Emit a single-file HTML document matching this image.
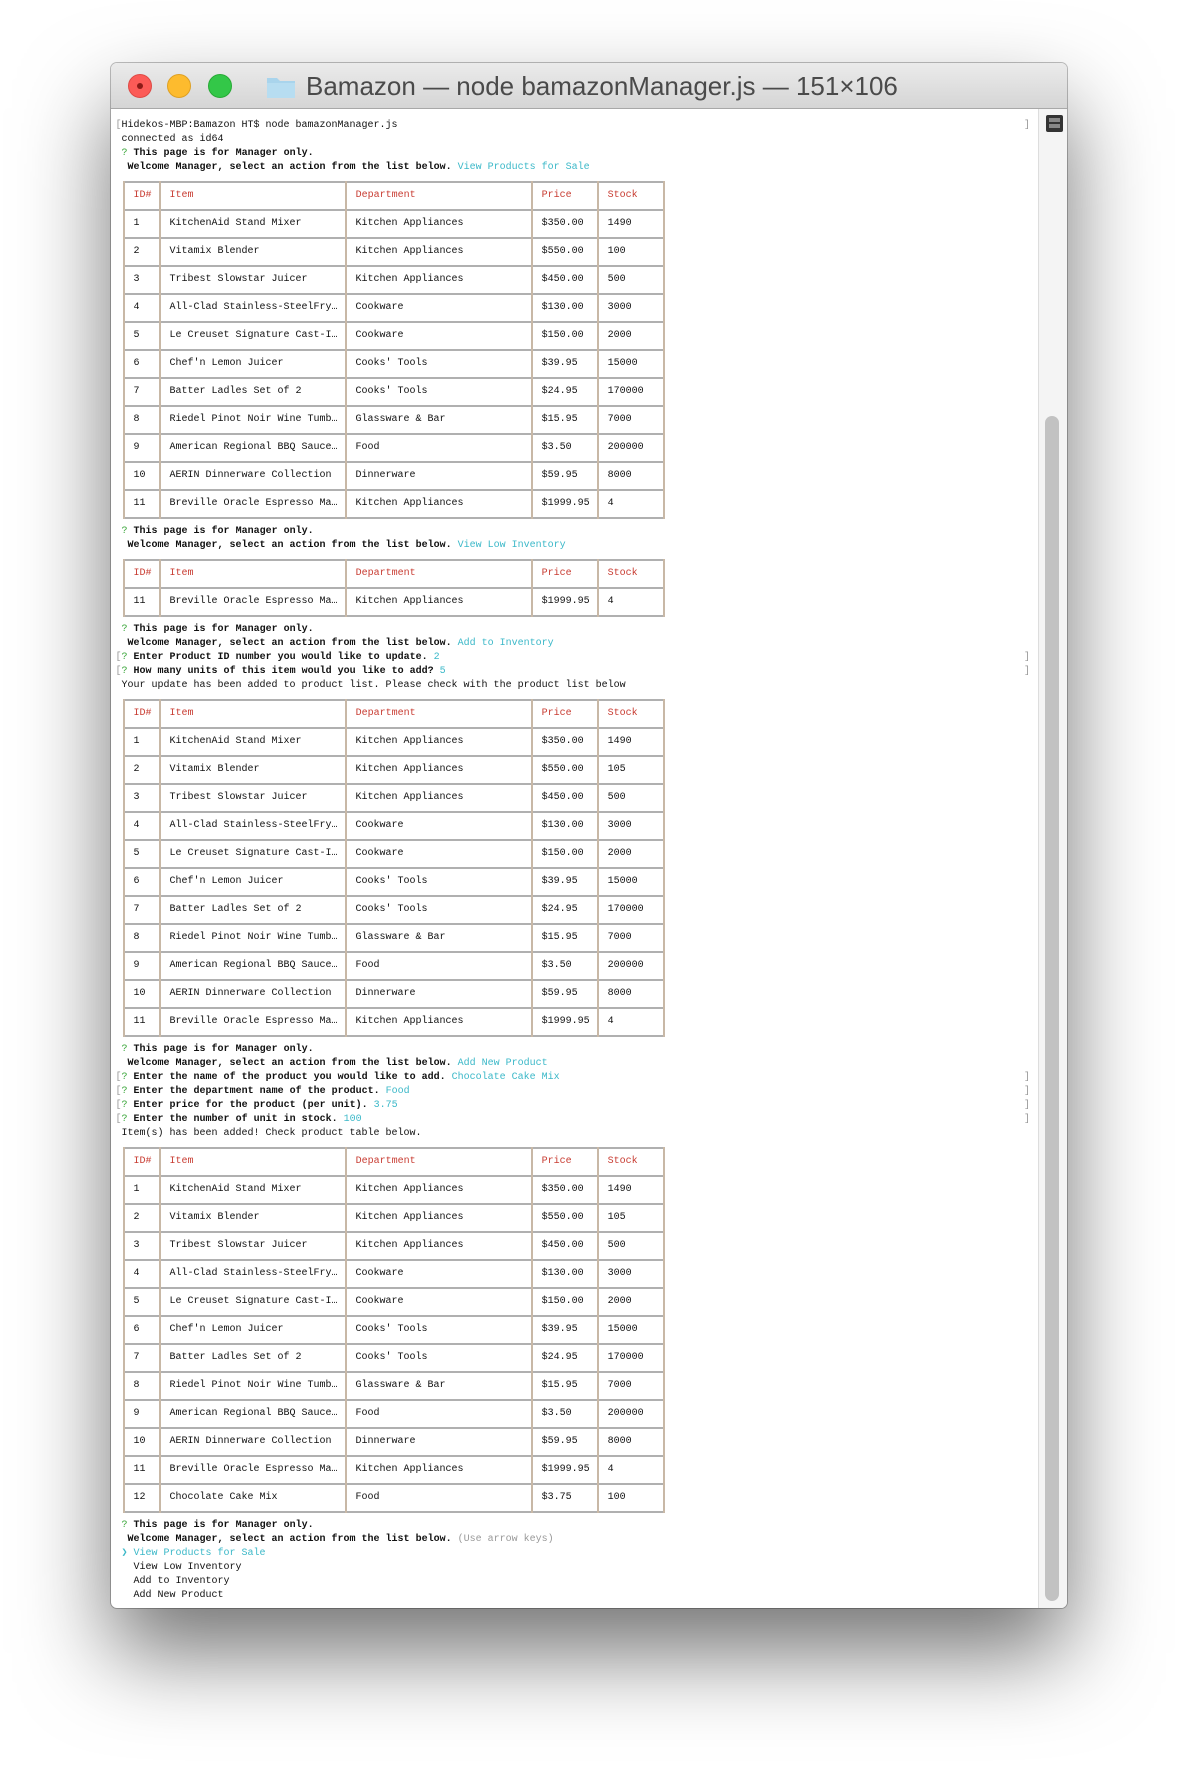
<!DOCTYPE html>
<html><head><meta charset="utf-8"><style>
html,body{margin:0;padding:0;background:#fff;width:1180px;height:1770px;overflow:hidden}
#win{position:absolute;left:111px;top:63px;width:956px;height:1545px;border-radius:6px;background:#fff;box-shadow:0 45px 90px rgba(0,0,0,.55),0 0 0 1px rgba(0,0,0,.25);overflow:hidden}
#tb{position:absolute;left:0;top:0;width:100%;height:45px;background:linear-gradient(#ebebeb,#d5d5d5);border-bottom:1px solid #a8a8a8}
.dot{position:absolute;top:11px;width:24px;height:24px;border-radius:50%}
#title{position:absolute;left:195px;top:8px;font:26px "Liberation Sans",sans-serif;color:#4a4a4a;white-space:nowrap}
#sb{position:absolute;left:927px;top:46px;width:29px;height:1500px;background:#f4f4f4;border-left:1px solid #ddd}
#thumb{position:absolute;left:934px;top:353px;width:14px;height:1185px;border-radius:7px;background:#c2c2c2}
.l{position:absolute;white-space:pre;font:10px/14px "Liberation Mono",monospace;color:#111;left:115.5px}
.b{font-weight:bold}.g{color:#3aa63a}.c{color:#3bb8c8}.r{color:#c83c32}.x{color:#999}
.h{position:absolute;height:2px;background:#b0b0b0;left:124px;width:541px}
.v{position:absolute;width:2px;background:#c8b8a6}
</style></head><body>
<div id="win">
<div id="tb">
<div class="dot" style="left:17px;background:#fc5b57;border:1px solid #de4a45;box-sizing:border-box"><div style="position:absolute;left:8px;top:8px;width:6px;height:6px;border-radius:50%;background:#8c1b17"></div></div>
<div class="dot" style="left:56px;background:#fdbb2e;border:1px solid #dea023;box-sizing:border-box"></div>
<div class="dot" style="left:97px;background:#33c748;border:1px solid #27aa35;box-sizing:border-box"></div>
<svg style="position:absolute;left:155px;top:12px" width="30" height="24"><path d="M1 3h10l3 3h15v17H1z" fill="#a9d4ec"/><path d="M1 8h28v15H1z" fill="#b7ddf1"/></svg>
<div id="title">Bamazon — node bamazonManager.js — 151×106</div>
</div>
<div id="sb"></div><div id="thumb"></div>
<div style="position:absolute;left:935px;top:52px;width:17px;height:17px;background:#333;border-radius:2px"><div style="position:absolute;left:3px;top:3px;width:11px;height:4px;background:#888"></div><div style="position:absolute;left:3px;top:9px;width:11px;height:4px;background:#888"></div></div>
</div>
<div id="t"></div>
<script>
var B=126;
var o='';function L(n,h){o+='<div class="l" style="top:'+(B-7+(n-1)*14)+'px">'+h+'</div>';}
function R(n){o+='<div class="l x" style="left:1024px;top:'+(B-7+(n-1)*14)+'px">]</div>';}
function pad(s,w){s=String(s);while(s.length<w)s+=' ';return s;}
var P=[[1,'KitchenAid Stand Mixer','Kitchen Appliances','$350.00','1490'],[2,'Vitamix Blender','Kitchen Appliances','$550.00','100'],[3,'Tribest Slowstar Juicer','Kitchen Appliances','$450.00','500'],[4,'All-Clad Stainless-SteelFry…','Cookware','$130.00','3000'],[5,'Le Creuset Signature Cast-I…','Cookware','$150.00','2000'],[6,"Chef'n Lemon Juicer","Cooks' Tools",'$39.95','15000'],[7,'Batter Ladles Set of 2',"Cooks' Tools",'$24.95','170000'],[8,'Riedel Pinot Noir Wine Tumb…','Glassware & Bar','$15.95','7000'],[9,'American Regional BBQ Sauce…','Food','$3.50','200000'],[10,'AERIN Dinnerware Collection','Dinnerware','$59.95','8000'],[11,'Breville Oracle Espresso Ma…','Kitchen Appliances','$1999.95','4']];
function row(n,r){L(n,('   '+pad(r[0],6)+pad(r[1],31)+pad(r[2],31)+pad(r[3],11)+r[4]).replace(/&/g,'&amp;'));}
function tbl(s,rows){var y=function(n){return B+(n-1)*14;};var e=s+2+rows.length*2;
for(var k=s;k<=e;k+=2){o+='<div class="h" style="top:'+(y(k)-1)+'px"></div>';}
[124,160,346,532,598,664].forEach(function(x){o+='<div class="v" style="left:'+(x-1)+'px;top:'+(y(s)-1)+'px;height:'+(y(e)-y(s)+2)+'px"></div>';});
L(s+1,'   <span class="r">ID#</span>   <span class="r">Item</span>                           <span class="r">Department</span>                     <span class="r">Price</span>      <span class="r">Stock</span>');
rows.forEach(function(r,i){row(s+3+2*i,r);});}
var Q=' <span class="g">?</span> <span class="b">This page is for Manager only.</span>';
var W='  <span class="b">Welcome Manager, select an action from the list below.</span> ';
L(1,'<span class="x">[</span>Hidekos-MBP:Bamazon HT$ node bamazonManager.js');R(1);
L(2,' connected as id64');L(3,Q);L(4,W+'<span class="c">View Products for Sale</span>');
tbl(5,P);
L(30,Q);L(31,W+'<span class="c">View Low Inventory</span>');tbl(32,[P[10]]);
L(37,Q);L(38,W+'<span class="c">Add to Inventory</span>');
L(39,'<span class="x">[</span><span class="g">?</span> <span class="b">Enter Product ID number you would like to update.</span> <span class="c">2</span>');R(39);
L(40,'<span class="x">[</span><span class="g">?</span> <span class="b">How many units of this item would you like to add?</span> <span class="c">5</span>');R(40);
L(41,' Your update has been added to product list. Please check with the product list below');
var P2=P.map(function(r){return r.slice();});P2[1][4]='105';tbl(42,P2);
L(67,Q);L(68,W+'<span class="c">Add New Product</span>');
L(69,'<span class="x">[</span><span class="g">?</span> <span class="b">Enter the name of the product you would like to add.</span> <span class="c">Chocolate Cake Mix</span>');R(69);
L(70,'<span class="x">[</span><span class="g">?</span> <span class="b">Enter the department name of the product.</span> <span class="c">Food</span>');R(70);
L(71,'<span class="x">[</span><span class="g">?</span> <span class="b">Enter price for the product (per unit).</span> <span class="c">3.75</span>');R(71);
L(72,'<span class="x">[</span><span class="g">?</span> <span class="b">Enter the number of unit in stock.</span> <span class="c">100</span>');R(72);
L(73,' Item(s) has been added! Check product table below.');
var P3=P2.concat([[12,'Chocolate Cake Mix','Food','$3.75','100']]);tbl(74,P3);
L(101,Q);L(102,W+'<span class="x">(Use arrow keys)</span>');
L(103,' <span class="c">❯ View Products for Sale</span>');L(104,'   View Low Inventory');L(105,'   Add to Inventory');L(106,'   Add New Product');
document.getElementById('t').innerHTML=o;
</script>
</body></html>
